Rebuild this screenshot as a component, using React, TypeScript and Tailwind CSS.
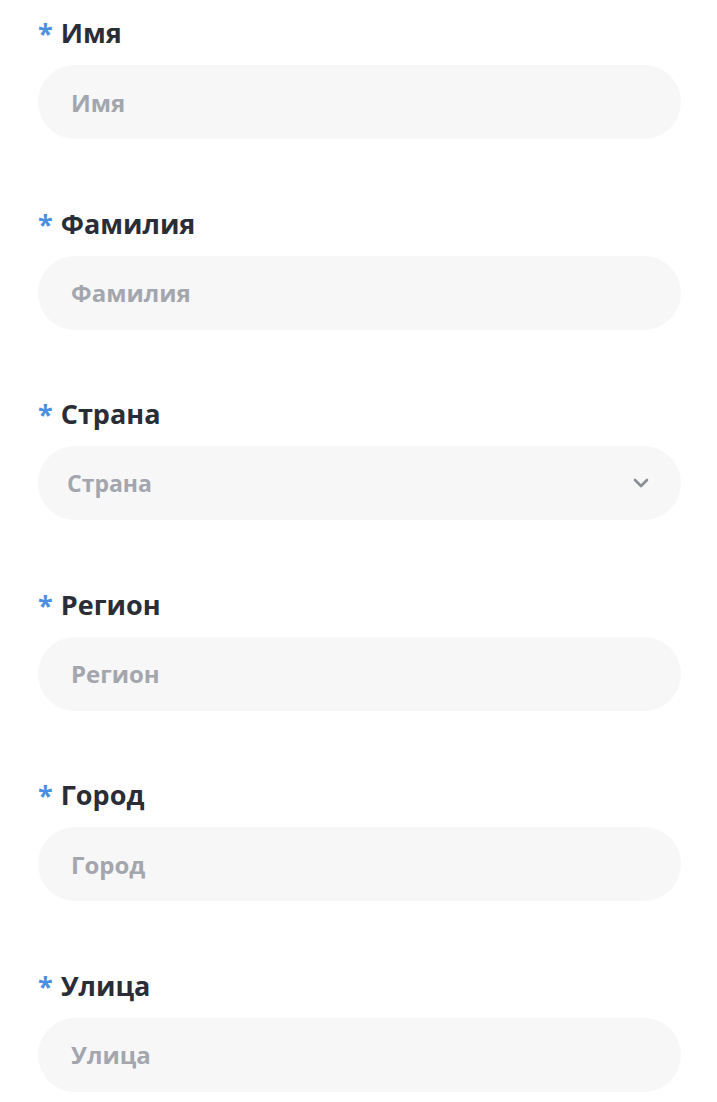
const fields = [
  { name: "first", label: "Имя" },
  { name: "last", label: "Фамилия" },
  { name: "country", label: "Страна", select: true },
  { name: "region", label: "Регион" },
  { name: "city", label: "Город" },
  { name: "street", label: "Улица" },
];

function Label({ text }: { text: string }) {
  return (
    <div className="flex items-center h-[36px] text-[27px] font-bold leading-[36px] text-[#2a2c36]">
      <span className="text-[#4a90e2] mr-[8px]">*</span>
      {text}
    </div>
  );
}

export default function App() {
  return (
    <div
      className="w-[717px] min-h-[1102px] bg-white pt-[15px] pl-[38px] pr-[36px]"
      style={{ fontFamily: '"Open Sans", "Noto Sans", sans-serif' }}
    >
      {fields.map((f) => (
        <div key={f.name} className="mb-[66.6px]">
          <Label text={f.label} />
          {f.select ? (
            <div className="mt-[14px] h-[74px] rounded-full bg-[#f7f7f8] flex items-center justify-between pl-[29px] pr-[32px]">
              <span className="text-[23px] font-bold text-[#a3a6ad]">{f.label}</span>
              <svg width="16" height="10" viewBox="0 0 16 10" fill="none">
                <path d="M2 2l6 6 6-6" stroke="#8a8d94" strokeWidth="2.6" strokeLinecap="round" strokeLinejoin="round" />
              </svg>
            </div>
          ) : (
            <input
              placeholder={f.label}
              className="mt-[14px] block w-full h-[74px] rounded-full bg-[#f7f7f8] px-[33px] text-[24px] font-bold outline-none placeholder:text-[#a3a6ad]"
            />
          )}
        </div>
      ))}
    </div>
  );
}
